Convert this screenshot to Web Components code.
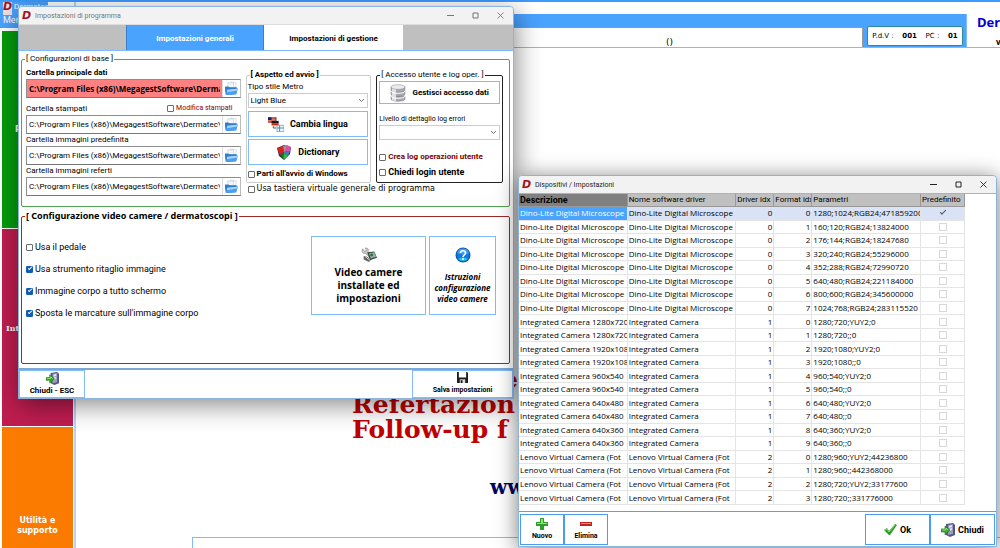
<!DOCTYPE html>
<html lang="it">
<head>
<meta charset="utf-8">
<title>Impostazioni di programma</title>
<style>
html, body { height: 100%; margin: 0; overflow: hidden; }
body {
  --blue: #4aa3ff; --line: #7fbcfb; --ink: #000;
  font: 9px/12px Roboto, "Noto Sans", sans-serif;
  color: var(--ink); background: #fff;
}
</style>
</head>
<body>
<desk-top></desk-top>
<script>
const define = (name, markup, setup) => {
  const template = document.createElement('template');
  template.innerHTML = markup;
  customElements.define(name, class extends HTMLElement {
    constructor() {
      super();
      this.attachShadow({ mode: 'open' }).append(template.content.cloneNode(true));
    }
    connectedCallback() {
      if (setup && !this.ready) { this.ready = true; setup(this, this.shadowRoot); }
    }
  });
};

const ICONS = {
  folder: ['0 0 16 16', '<path d="M7 1l6 1-1 9-7-2z" fill="#fff" stroke="#b9c4cf" stroke-width=".6"/><path d="M4 2l6 0 1 8-7 1z" fill="#f4f6f8" stroke="#b9c4cf" stroke-width=".6"/><path d="M1 6l4 0 1 1 7 0 0 7-11 1z" fill="#1f6cc8"/><path d="M3 9l12-1-2 6-11 1z" fill="#4a9fee"/><path d="M3 9l12-1-1 2-11 2z" fill="#a5d3fa"/><path d="M1 6l4 0 1 1 8 0v1l-11 1-1 5z" fill="#2b7cd6"/>'],
  database: ['0 0 16 18', '<g fill="#a9a9b1" stroke="#77777f" stroke-width=".5"><path d="M1 12v3c0 3 14 3 14 0v-3z"/><path d="M1 7v3c0 3 14 3 14 0V7z"/><path d="M1 3v3c0 3 14 3 14 0V3z"/></g><path d="M3 4v12.600M5 4v13M3 9v3" stroke="#f5f5f8" stroke-width="1.500"/><ellipse cx="8" cy="3" rx="7" ry="2.300" fill="#ececf0" stroke="#85858d" stroke-width=".5"/><path d="M1 7c0 3 14 3 14 0M1 12c0 3 14 3 14 0" fill="none" stroke="#fff"/>'],
  flags: ['0 0 18 17', '<path d="M0 1h9v6H0z" fill="#c01818"/><path d="M0 1h4v3H0z" fill="#171b6b"/><path d="M4 3h5M0 5h9" stroke="#f5f5f5" stroke-width=".8"/><path d="M4 5h8v3H4z" fill="#141414"/><path d="M4 8h8v2H4z" fill="#d91c1c"/><path d="M4 10h8v1H4z" fill="#f2c300"/><path d="M9 1v6" stroke="#333"/><path d="M6 11v2h3" stroke="#444" fill="none"/><path d="M10 10h8v7h-8z" fill="#eef4fb" stroke="#5b9ad0" stroke-width=".8"/><path d="M13 10v7M10 13h8" stroke="#3f84c8"/>'],
  palette: ['0 0 16 16', '<path d="M1 4L8 1l7 2-1 7-6 6-5-4z" fill="#333"/><path d="M1 4l6-2 1 6-4 3z" fill="#d62222"/><path d="M7 2l4-1 1 5-4 2z" fill="#9a9a9a"/><path d="M11 1l4 2-1 4-6 1z" fill="#e14fa8"/><path d="M8 8l6-1-2 5z" fill="#3c7be0"/><path d="M8 8l4 4-4 4-1-3z" fill="#30b24a"/><path d="M4 11l4-3-1 6z" fill="#156c35"/>'],
  camera: ['0 0 18 16', '<path d="M2 1l2 3 2-1-1-3c3 0 4 2 3 4l4 5-2 2-5-5C2 7 0 4 2 1z" fill="#c9c9c9" stroke="#777" stroke-width=".6"/><path d="M7 5l8-1 3 7-8 3z" fill="#444"/><path d="M9 6l6-1 2 5-6 2z" fill="#8fb5a0"/><circle cx="12" cy="8" r="1.600" fill="#177c32"/><path d="M3 9l4 1 4 4-2 2-6-3z" fill="#666"/><path d="M5 10l5 4" stroke="#ddd"/>'],
  help: ['0 0 16 16', '<circle cx="8" cy="8" r="7.500" fill="#0a4fa8"/><circle cx="8" cy="8" r="6.500" fill="#0f79dc"/><path d="M2 6a6.300 6.300 0 0 1 12 0q-6 3-12 0z" fill="#3f9df0"/><path d="M3 12q5 4 10 0-5-3-10 0z" fill="#25c3f2"/><path d="M5.500 6c0-3 5-3 5 0 0 2-2.500 2-2.500 4" fill="none" stroke="#fff" stroke-width="1.600"/><circle cx="8" cy="12" r="1" fill="#fff"/>'],
  exit: ['0 0 14 14', '<path d="M5 1l7-1 2 2v10l-5 2-4-2z" fill="#55557d"/><path d="M7 2l5-1v10l-5 1z" fill="#9a9ac6"/><path d="M8 3l3-1v2l-3 1zM8 6l3-1v2L8 8z" fill="#e3e3f5"/><path d="M0 6h4V3l5 4-5 5V9H0z" fill="#2fae22" stroke="#157012" stroke-width=".6"/><path d="M1 7h4V5l2 2" stroke="#a5ee8a" fill="none" stroke-width=".8"/>'],
  save: ['0 0 12 12', '<path d="M0 0h11l1 1v11H0z" fill="#1c1c1c"/><path d="M2 0h8v6H2z" fill="#fff"/><path d="M3 8h6v4H3z" fill="#d9d9d9"/><path d="M4 9h2v3H4z" fill="#1c1c1c"/>'],
  plus: ['0 0 12 12', '<path d="M4 0h4v4h4v4H8v4H4V8H0V4h4z" fill="#2f9e2a"/><path d="M5 1h2v4h4v1H1V5h4z" fill="#8ee07a"/>'],
  minus: ['0 0 12 4', '<path d="M0 0h12v4H0z" fill="#c42420"/><path d="M1 1h10v1H1z" fill="#f08a80"/>'],
  ok: ['0 0 13 11', '<path d="M0 6l3-2 2 3 6-7 2 1-7 10H5z" fill="#2c9a27"/><path d="M1 6l2-1 2 3 6-7" fill="none" stroke="#86de6c"/>'],
  min: ['0 0 7 7', '<path d="M0 3.500h7" stroke="currentColor"/>'],
  max: ['0 0 7 7', '<path d="M1 1h5v5H1z" fill="none" stroke="currentColor"/>'],
  close: ['0 0 7 7', '<path d="M.5.5l6 6M6.500.5l-6 6" fill="none" stroke="currentColor" stroke-width=".9"/>'],
  chevron: ['0 0 7 5', '<path d="M1 1l2.500 2.500L6 1" fill="none" stroke="#555" stroke-width=".8"/>']
};
define('app-icon', `<style>:host{display:inline-block;flex:none;width:16px;height:16px}svg{display:block;width:100%;height:100%}</style><svg aria-hidden="true"></svg>`,
  (host, root) => {
    const [box, shapes] = ICONS[host.getAttribute('name')];
    const svg = root.querySelector('svg');
    svg.setAttribute('viewBox', box);
    svg.innerHTML = shapes;
  });

define('brand-mark', `<style>
  :host{display:inline-block;flex:none;width:9px;font:italic bold 11px/10px "DejaVu Sans",sans-serif;color:#a3121c}
  </style><span>D</span>`);

define('metro-button', `<style>
  :host{display:flex}
  button{flex:1;min-width:0;display:flex;align-items:center;justify-content:center;gap:var(--gap,6px);flex-direction:var(--dir,row);
    margin:0;padding:0;border:1px solid var(--line);background:#fff;font:inherit;color:inherit;text-align:center}
  </style><button type="button"><slot></slot></button>`);

define('check-box', `<style>
  :host{display:block}
  label{display:flex;align-items:center;gap:2px;white-space:nowrap}
  input{appearance:none;box-sizing:border-box;flex:none;width:7px;height:7px;margin:0;border:1px solid #6a6a6a;border-radius:1px;background:#fff;position:relative}
  input:checked{background:#0f5db5;border-color:#0f5db5}
  input:checked::after{content:"";position:absolute;left:1px;top:0;width:3px;height:1px;border:solid #fff;border-width:0 0 1px 1px;transform:rotate(-45deg)}
  </style><label><input type="checkbox"><span><slot></slot></span></label>`,
  (host, root) => { root.querySelector('input').checked = host.hasAttribute('checked'); });

define('group-box', `<style>
  :host{display:grid;min-width:0}
  fieldset{min-width:0;margin:0;padding:0;border:1px solid var(--edge,#ccc);border-radius:2px}
  legend{margin-left:3px;padding:0 1px;white-space:nowrap;font:var(--legend,8px/10px Roboto,sans-serif)}
  </style><fieldset><legend></legend><slot></slot></fieldset>`,
  (host, root) => { root.querySelector('legend').textContent = `[ ${host.getAttribute('caption')} ]`; });

define('path-field', `<style>
  :host{display:block}
  label{display:block;height:12px;line-height:12px}
  div{display:flex;height:17px;border:1px solid #8d8d8d;border-right-color:#bbb;border-bottom-color:#777;background:#fff}
  input{flex:1;min-width:0;margin:0;padding:0 2px;border:0;background:var(--fill,#fff);font:inherit;font:var(--path,inherit);color:inherit}
  button{flex:none;display:flex;align-items:center;justify-content:center;width:18px;margin:0;padding:0;border:0;border-left:1px solid #ddd;background:#fff}
  app-icon{width:15px;height:15px}
  </style><label for="path"></label><div><input id="path" type="text"><button type="button" aria-label="Sfoglia"><app-icon name="folder"></app-icon></button></div>`,
  (host, root) => {
    root.querySelector('label').textContent = host.getAttribute('label');
    root.querySelector('input').value = host.getAttribute('value');
  });

define('select-field', `<style>
  :host{display:block}
  label{display:block;line-height:12px;white-space:nowrap}
  div{position:relative}
  select{appearance:none;display:block;box-sizing:border-box;width:100%;height:15px;margin:0;padding:0 2px;border:1px solid #ccc;background:#fff;font:inherit;color:inherit}
  app-icon{position:absolute;right:3px;top:5px;width:7px;height:5px}
  </style><label for="choice"></label><div><select id="choice"><option></option></select><app-icon name="chevron"></app-icon></div>`,
  (host, root) => {
    root.querySelector('label').textContent = host.getAttribute('label');
    root.querySelector('option').textContent = host.getAttribute('value') || '';
  });

define('app-window', `<style>
  :host{display:flex;flex-direction:column;box-sizing:border-box;background:#fff;border:1px solid #8ab4dc;border-radius:4px 4px 0 0}
  header{flex:none;display:flex;align-items:center;gap:4px;height:17px;padding:0 9px 0 3px;background:#f2f2f2;border-radius:4px 4px 0 0;color:var(--title,#222)}
  h1{flex:1;margin:0;font:inherit;font-size:7px;white-space:nowrap}
  nav{display:flex;gap:18px}
  nav button{display:block;margin:0;padding:0;border:0;background:none;color:inherit}
  nav app-icon{display:block;width:7px;height:7px}
  </style><header><brand-mark></brand-mark><h1></h1><nav>
  <button type="button" aria-label="Riduci"><app-icon name="min"></app-icon></button>
  <button type="button" aria-label="Ingrandisci"><app-icon name="max"></app-icon></button>
  <button type="button" aria-label="Chiudi"><app-icon name="close"></app-icon></button></nav></header><slot></slot>`,
  (host, root) => { root.querySelector('h1').textContent = host.getAttribute('caption'); });

define('settings-panel', `<style>
  :host{display:flex;flex-direction:column;flex:1;border-top:1px solid #ddd}
  .tabs{display:grid;grid-template-columns:107fr 138fr 139fr 110fr;height:25px;background:#bfbfbf;border-bottom:1px solid var(--line)}
  .tabs button{grid-row:1;margin:0;padding:2px 0 0;border:0;background:#fff;font:inherit;font-size:8px;font-weight:bold;color:#000}
  .tabs button:first-child{grid-column:2;background:var(--blue);color:#fff;border-left:1px solid #3c7fc4;border-right:1px solid #3c7fc4}
  .tabs button:last-child{grid-column:3}
  main{display:flex;flex-direction:column;gap:4px;padding:3px 3px 4px 2px}
  .base{--edge:#4fa64f}
  .base>.cols{display:grid;grid-template-columns:215fr 126fr 127fr;grid-template-rows:auto 1fr;column-gap:5px;height:139px;padding:3px 6px 0 4px;box-sizing:content-box}
  .paths{position:relative;grid-row:1/3;font-size:8px}
  .paths path-field:first-child{margin-bottom:5px;font-weight:bold;--fill:#ff8080;--path:bold 8px/12px "Open Sans",sans-serif}
  .edit{position:absolute;right:8px;top:35px;font-size:7px;color:#8b0000}
  .cols group-box{margin-top:3px;height:113px}
  .stack{display:flex;flex-direction:column;padding:1px 2px 0}
  .look{--edge:#ccc;--legend:bold 8px/10px Roboto,sans-serif}
  .access{--edge:#222}
  .look .stack{gap:3px;padding-left:1px}
  .look select-field{font-size:8px}
  .look metro-button{height:26px}
  .look metro-button+metro-button{margin-top:-1px}
  .virtual{grid-column:2/4;font:8px/12px "DejaVu Sans",sans-serif;margin-left:2px}
  metro-button,.b{font-weight:bold}
  .small{font-size:8px}
  .red{color:#7b0000}
  .access metro-button{height:23px;margin-bottom:9px;font-size:8px}
  .access select-field{margin-bottom:11px;font-size:7px}
  .access .red{margin-bottom:3px}
  .access app-icon{width:16px;height:18px}
  .cams{--edge:#9c2a2a;--legend:bold 9px/10px "Noto Sans",sans-serif}
  .cams>.cols{display:flex;justify-content:space-between;height:142px;padding:0 13px 0 4px;box-sizing:border-box}
  .checks{display:flex;flex-direction:column;gap:10px;padding-top:20px}
  .big{display:flex;gap:3px;height:79px;margin-top:15px;--dir:column;--gap:3px}
  .big metro-button{width:115px;font:bold 10px/13px "Open Sans",sans-serif}
  .big metro-button+metro-button{width:67px;font:italic bold 8px/11px "Open Sans",sans-serif;--gap:8px}
  footer{display:flex;justify-content:space-between;border-top:2px solid #7ea8d4;--dir:column;--gap:0;font-size:8px}
  footer metro-button{width:66px;height:28px}
  footer metro-button+metro-button{width:101px;font-size:7px}
  footer app-icon{width:13px;height:13px}
  footer app-icon[name=save]{width:11px;height:11px;margin-bottom:1px}
  </style>
  <div class="tabs"><button type="button">Impostazioni generali</button><button type="button">Impostazioni di gestione</button></div>
  <main>
    <group-box class="base" caption="Configurazioni di base"><div class="cols">
      <div class="paths">
        <path-field label="Cartella principale dati" value="C:\\Program Files (x86)\\MegagestSoftware\\Dermatec\\"></path-field>
        <path-field label="Cartella stampati" value="C:\\Program Files (x86)\\MegagestSoftware\\Dermatec\\"></path-field>
        <path-field label="Cartella immagini predefinita" value="C:\\Program Files (x86)\\MegagestSoftware\\Dermatec\\"></path-field>
        <path-field label="Cartella immagini referti" value="C:\\Program Files (x86)\\MegagestSoftware\\Dermatec\\"></path-field>
        <check-box class="edit">Modifica stampati</check-box>
      </div>
      <group-box class="look" caption="Aspetto ed avvio"><div class="stack">
        <select-field label="Tipo stile Metro" value="Light Blue"></select-field>
        <metro-button><app-icon name="flags"></app-icon>Cambia lingua</metro-button>
        <metro-button><app-icon name="palette"></app-icon>Dictionary</metro-button>
        <check-box class="b small">Parti all'avvio di Windows</check-box>
      </div></group-box>
      <group-box class="access" caption="Accesso utente e log oper."><div class="stack">
        <metro-button><app-icon name="database"></app-icon>Gestisci accesso dati</metro-button>
        <select-field label="Livello di dettaglio log errori"></select-field>
        <check-box class="b red small">Crea log operazioni utente</check-box>
        <check-box class="b">Chiedi login utente</check-box>
      </div></group-box>
      <check-box class="virtual">Usa tastiera virtuale generale di programma</check-box>
    </div></group-box>
    <group-box class="cams" caption="Configurazione video camere / dermatoscopi"><div class="cols">
      <div class="checks">
        <check-box>Usa il pedale</check-box>
        <check-box checked>Usa strumento ritaglio immagine</check-box>
        <check-box checked>Immagine corpo a tutto schermo</check-box>
        <check-box checked>Sposta le marcature sull'immagine corpo</check-box>
      </div>
      <div class="big">
        <metro-button><app-icon name="camera"></app-icon><span>Video camere<br>installate ed<br>impostazioni</span></metro-button>
        <metro-button><app-icon name="help"></app-icon><span>Istruzioni<br>configurazione<br>video camere</span></metro-button>
      </div>
    </div></group-box>
  </main>
  <footer><metro-button><app-icon name="exit"></app-icon><span>Chiudi - ESC</span></metro-button>
  <metro-button><app-icon name="save"></app-icon><span>Salva impostazioni</span></metro-button></footer>`);

const DINO = 'Dino-Lite Digital Microscope', INT = 'Integrated Camera', LEN = 'Lenovo Virtual Camera (Fot';
const DEVICES = [
  [DINO, DINO, 0, 0, '1280;1024;RGB24;471859200'], [DINO, DINO, 0, 1, '160;120;RGB24;13824000'],
  [DINO, DINO, 0, 2, '176;144;RGB24;18247680'], [DINO, DINO, 0, 3, '320;240;RGB24;55296000'],
  [DINO, DINO, 0, 4, '352;288;RGB24;72990720'], [DINO, DINO, 0, 5, '640;480;RGB24;221184000'],
  [DINO, DINO, 0, 6, '800;600;RGB24;345600000'], [DINO, DINO, 0, 7, '1024;768;RGB24;283115520'],
  [INT + ' 1280x720', INT, 1, 0, '1280;720;YUY2;0'], [INT + ' 1280x720', INT, 1, 1, '1280;720;;0'],
  [INT + ' 1920x1080', INT, 1, 2, '1920;1080;YUY2;0'], [INT + ' 1920x1080', INT, 1, 3, '1920;1080;;0'],
  [INT + ' 960x540', INT, 1, 4, '960;540;YUY2;0'], [INT + ' 960x540', INT, 1, 5, '960;540;;0'],
  [INT + ' 640x480', INT, 1, 6, '640;480;YUY2;0'], [INT + ' 640x480', INT, 1, 7, '640;480;;0'],
  [INT + ' 640x360', INT, 1, 8, '640;360;YUY2;0'], [INT + ' 640x360', INT, 1, 9, '640;360;;0'],
  [LEN, LEN, 2, 0, '1280;960;YUY2;44236800'], [LEN, LEN, 2, 1, '1280;960;;442368000'],
  [LEN, LEN, 2, 2, '1280;720;YUY2;33177600'], [LEN, LEN, 2, 3, '1280;720;;331776000']
];
define('device-panel', `<style>
  :host{display:flex;flex-direction:column;flex:1;min-height:0;border-top:1px solid var(--line)}
  .grid{flex:1;min-height:0;padding-bottom:6px}
  table{width:calc(100% - 31px);height:100%;border-collapse:separate;border-spacing:0;table-layout:fixed}
  th,td{padding:0 1px;height:1px;line-height:12px;overflow:hidden;white-space:nowrap;border:solid #e4e4e4;border-width:0 1px 1px 0;text-align:left;font-weight:normal}
  td{font-family:"Open Sans",sans-serif;font-size:8px}
  th{background:#c0c0c0;border-color:#999;font-size:8px}
  th:first-child{background:#808080;font-weight:bold;font-size:9px}
  .n{text-align:right}
  .c{text-align:center}
  tr.on td{background:#d9e3f5}
  tr.on td:first-child{background:var(--blue);color:#fff}
  td input{appearance:none;display:block;box-sizing:border-box;width:8px;height:8px;margin:0 auto;border:1px solid #d8d8d8;background:#fff;position:relative}
  td input:checked{border-color:transparent;background:none}
  td input:checked::after{content:"";position:absolute;left:0;top:0;width:5px;height:2px;border:solid #555;border-width:0 0 1px 1px;transform:rotate(-45deg)}
  .short{width:38px}
  .flag{width:44px}
  footer{display:flex;gap:0;padding:2px 1px 1px;border-top:1px solid var(--blue);font-weight:bold;--line:#4a9cf0}
  footer metro-button{width:65px;height:31px;--gap:3px}
  footer metro-button:nth-child(-n+2){width:44px;font-size:7px;--dir:column;--gap:0}
  footer metro-button:nth-child(3){margin-left:auto}
  app-icon{width:14px;height:14px}
  app-icon[name=ok]{width:13px;height:11px}
  app-icon[name=plus],app-icon[name=minus]{width:12px;height:12px}
  </style>
  <div class="grid"><table>
  <colgroup><col><col><col class="short"><col class="short"><col><col class="flag"></colgroup>
  <thead><tr><th>Descrizione</th><th>Nome software driver</th><th>Driver idx</th><th>Format idx</th><th>Parametri</th><th>Predefinito</th></tr></thead><tbody></tbody></table></div>
  <footer><metro-button><app-icon name="plus"></app-icon>Nuovo</metro-button><metro-button><app-icon name="minus"></app-icon>Elimina</metro-button>
  <metro-button><app-icon name="ok"></app-icon>Ok</metro-button><metro-button><app-icon name="exit"></app-icon>Chiudi</metro-button></footer>`,
  (host, root) => {
    root.querySelector('tbody').innerHTML = DEVICES.map(([d, s, i, f, p], row) =>
      `<tr${row ? '' : ' class="on"'}><td>${d}</td><td>${s}</td><td class="n">${i}</td><td class="n">${f}</td><td>${p}</td><td class="c"><input type="checkbox" aria-label="Predefinito"${row ? '' : ' checked'}></td></tr>`).join('');
  });

define('main-screen', `<style>
  :host{display:grid;grid-template-columns:76px 1fr;height:100%;border-top:2px solid #3b9bff;box-sizing:border-box}
  .left{display:flex;flex-direction:column;gap:3px;border-right:2px solid #b5d6f7;min-width:0}
  .app{width:48px;height:26px;box-sizing:border-box;background:var(--blue);color:#fff;padding:0 3px;font-size:9px;line-height:10px}
  .app div{display:flex;gap:2px;height:13px;font-size:8px}
  .app brand-mark{background:#f3dfe0}
  .side{flex:1;display:grid;grid-template-rows:197fr 197fr 121fr;gap:1px;padding:0 1px 0 2px;color:#fff;text-align:center}
  .side a{color:inherit;text-decoration:none;font:bold 8px/10px "DejaVu Sans",sans-serif;background:#fa7b00;display:flex;align-items:center;justify-content:center}
  .side a:nth-child(1){background:#059c0c}
  .side a:nth-child(2){background:#bf1d50}
  .side a:nth-child(1){justify-content:flex-start;padding-left:13px}
  .side a:nth-child(2){justify-content:flex-start;padding-left:4px;font-family:"DejaVu Serif",serif}
  .side a:nth-child(3){align-items:flex-end;padding-bottom:12px}
  .right{display:flex;flex-direction:column;min-width:0}
  .top{flex:none;display:grid;grid-template:33px / 1fr 100px 34px;padding-top:12px;border-bottom:1px solid var(--line)}
  .bar{background:var(--blue);padding-top:13px;display:flex}
  .bar p{flex:1;margin:0 3px 0 0;background:#fff;border:1px solid #999;border-width:1px 1px 0 0;font:9px/28px "DejaVu Sans",sans-serif}
  .bar p span{display:block;margin-left:590px}
  .pos{background:var(--blue);padding:12px 3px 1px 1px;display:flex}
  .pos p{flex:1;margin:0;border:1px solid #2a8c96;border-radius:2px;background:#fff;display:flex;align-items:center;justify-content:space-around;font:7px/12px "DejaVu Sans",sans-serif}
  .name{border-left:1px solid var(--line);padding-left:10px;color:#00c;font:bold 13px/17px "Open Sans",sans-serif}
  .name small{display:block;margin-left:19px;color:#000;font-size:8px;line-height:22px}
  .page{flex:1;display:flex;flex-direction:column;padding-left:116px}
  .claim{margin:319px 0 0 160px;color:#c00000;font:bold 25px/25px "DejaVu Serif",serif;white-space:nowrap}
  .claim .web{margin:33px 0 0 138px;color:#000060;font-size:20px}
  .foot{flex:1;margin-top:37px;border:1px solid var(--line);border-width:1px 0 0 1px}
  .claim div:first-child{margin-left:150px}
  </style>
  <div class="left"><div class="app"><div><brand-mark></brand-mark><span>Dermatec</span></div>Men</div>
    <nav class="side"><a href="#">P</a><a href="#">Int</a><a href="#">Utilità e<br>supporto</a></nav></div>
  <div class="right"><div class="top"><div class="bar"><p><span>()</span></p></div>
    <div class="pos"><p><span>P.d.V :</span><b>001</b><span>PC :</span><b>01</b></p></div>
    <div class="name">Der<small>v</small></div></div>
    <section class="page"><div class="claim"><div>e</div><div>Refertazion</div><div>Follow-up f</div><div class="web">ww</div></div><div class="foot"></div></section></div>`);

define('desk-top', `<style>
  :host{display:block;position:relative;height:100%}
  app-window{position:absolute}
  .settings{left:18px;top:6px;width:calc(50% - 4px);--title:#777;box-shadow:2px 6px 26px #0007}
  .devices{left:518px;right:3px;top:175px;bottom:1px;box-shadow:0 3px 22px #0008}
  </style>
  <main-screen></main-screen>
  <app-window class="settings" caption="Impostazioni di programma"><settings-panel></settings-panel></app-window>
  <app-window class="devices" caption="Dispositivi / Impostazioni"><device-panel></device-panel></app-window>`);
</script>
</body>
</html>
